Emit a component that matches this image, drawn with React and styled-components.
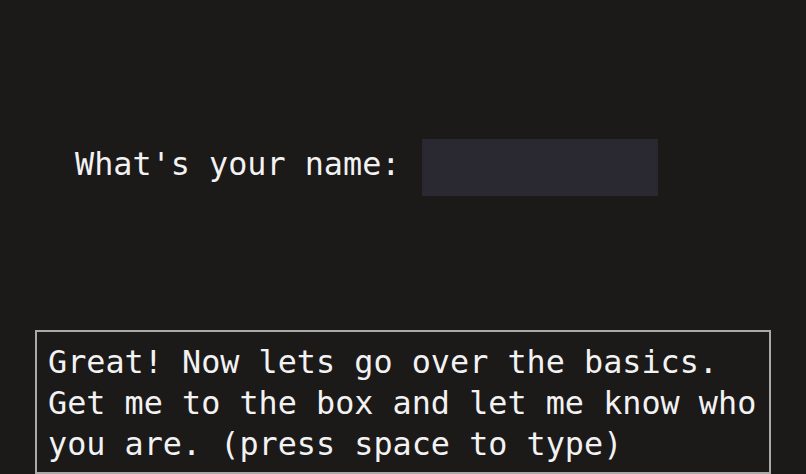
import styled, { createGlobalStyle } from "styled-components";

const GlobalStyle = createGlobalStyle`
  html, body {
    margin: 0;
    padding: 0;
    background: #1c1919;
    overflow: hidden;
  }
  body {
    font-family: "DejaVu Sans Mono", "Liberation Mono", monospace;
    color: #f2f2f2;
  }
`;

const lines = [
  "Great! Now lets go over the basics.",
  "Get me to the box and let me know who",
  "you are. (press space to type)",
];

export default function App() {
  return (
    <>
      <GlobalStyle />
      <Screen>
        <Stage>
          <Label>What's your name:</Label>
          <NameBox />
        </Stage>
        <Dialog>
          {lines.map((l) => (
            <Line key={l}>{l}</Line>
          ))}
        </Dialog>
      </Screen>
    </>
  );
}

const Screen = styled.div`
  width: 806px;
  height: 474px;
  display: flex;
  flex-direction: column;
  overflow: hidden;
`;

const Stage = styled.div`
  height: 330px;
  box-sizing: border-box;
  padding: 139px 0 0 75px;
  display: flex;
  align-items: flex-start;
`;

const Label = styled.div`
  font-size: 31.8px;
  line-height: 41px;
  margin-top: 4px;
  white-space: pre;
`;

const NameBox = styled.div`
  width: 236px;
  height: 57px;
  margin-left: 22px;
  background: #2a2931;
`;

const Dialog = styled.div`
  margin-left: 35px;
  width: 736px;
  height: 144px;
  box-sizing: border-box;
  border: 2px solid #a9a9a9;
  padding: 9px 0 0 11px;
  font-size: 31.8px;
  line-height: 41px;
`;

const Line = styled.div`
  white-space: pre;
`;
